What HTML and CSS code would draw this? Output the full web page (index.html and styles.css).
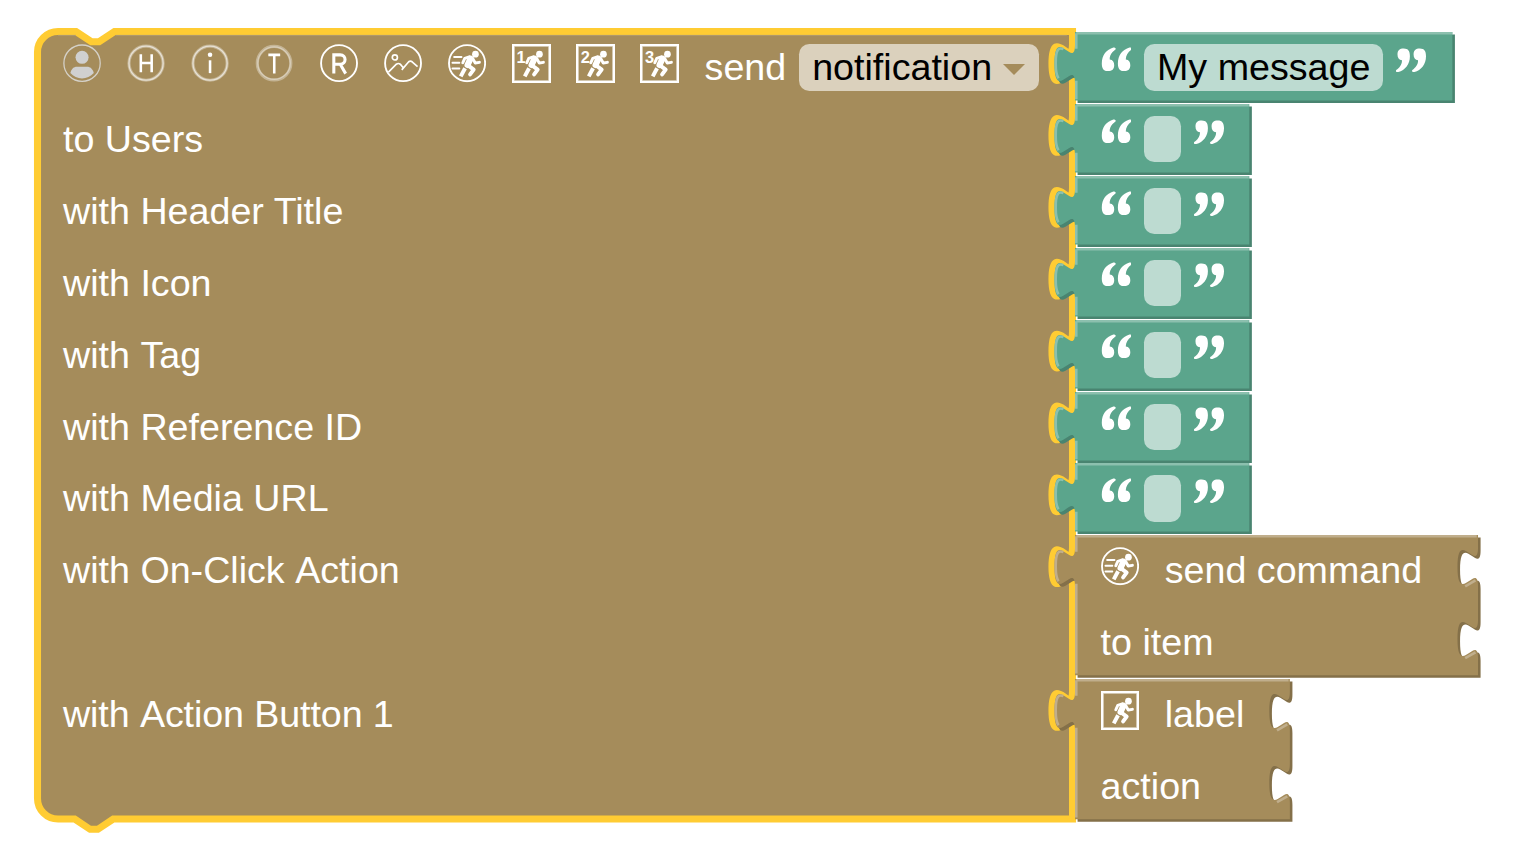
FILE: index.html
```html
<!DOCTYPE html>
<html lang="en">
<head>
<meta charset="utf-8">
<title>Send notification block</title>
<link rel="stylesheet" href="styles.css">
</head>
<body>
<svg class="defs" aria-hidden="true">
  <defs>
    <symbol id="runner" viewBox="0 0 39 39">
      <circle cx="27.800" cy="10.300" r="3.400" fill="#fff"/>
      <g fill="none" stroke="#fff" stroke-linecap="round" stroke-linejoin="round">
        <path d="M22.800 14.800L19.800 21.300" stroke-width="6.200"/>
        <path d="M21.500 13L17 14.500L15 19" stroke-width="3"/>
        <path d="M25 14.800L27.600 19.300L31.800 18.600" stroke-width="3"/>
        <path d="M20.800 22L26 26L22.400 30.800" stroke-width="4"/>
        <path d="M17.300 24.600L12.900 32.800" stroke-width="4" stroke-linecap="butt"/>
      </g>
    </symbol>
    <symbol id="run-circle" viewBox="0 0 39 39">
      <circle cx="19.300" cy="19.400" r="18.300" fill="none" stroke="#fff" stroke-width="1.900"/>
      <path d="M6.200 13.200h7.500M4.500 19h7M4.500 24.800h7" stroke="#fff" stroke-width="1.900" stroke-linecap="round"/>
      <use href="#runner" width="39" height="39"/>
    </symbol>
    <symbol id="open-quote" viewBox="0 0 31 31">
      <g id="q66" fill="#fff">
        <path d="M12.500 2.600C5.500 4.500 .8 10.500 .8 18.500C.8 23.500 2.500 26.200 7 26.200C11.200 26.200 13.300 24.200 13.300 20.300C13.300 16.800 11.800 14.800 8.800 14.500C8.600 10.500 11.200 7 14.600 4.600C15.400 3.400 14.200 2.200 12.500 2.600Z"/>
        <path transform="translate(16.200 0)" d="M12.500 2.600C5.500 4.500 .8 10.500 .8 18.500C.8 23.500 2.500 26.200 7 26.200C11.200 26.200 13.300 24.200 13.300 20.300C13.300 16.800 11.800 14.800 8.800 14.500C8.600 10.500 11.200 7 14.600 4.600C15.400 3.400 14.200 2.200 12.500 2.600Z"/>
      </g>
    </symbol>
    <symbol id="close-quote" viewBox="0 0 31 31">
      <use href="#q66" transform="rotate(180 15.500 14.900)"/>
    </symbol>
    <path id="gs" d="M0 0H67.900V26.700H0V20c0,-10 -8,8 -8,-7.500s8,2.500 8,-7.500Z"/>
  </defs>
</svg>

<main class="workspace">
  <svg class="shape" width="1514" height="846" aria-hidden="true">
    <g transform="translate(37.500 31.500) scale(2.567)">
      <path class="main-fill" d="M0 8A8 8 0 0 1 8 0H15l6,4 3,0 6,-4H403.200
        V5c0,10 -8,-8 -8,7.500s8,-2.500 8,7.500V33c0,10 -8,-8 -8,7.500s8,-2.500 8,7.500
        V61c0,10 -8,-8 -8,7.500s8,-2.500 8,7.500V89c0,10 -8,-8 -8,7.500s8,-2.500 8,7.500
        V117c0,10 -8,-8 -8,7.500s8,-2.500 8,7.500V145c0,10 -8,-8 -8,7.500s8,-2.500 8,7.500
        V173c0,10 -8,-8 -8,7.500s8,-2.500 8,7.500V201c0,10 -8,-8 -8,7.500s8,-2.500 8,7.500
        V257c0,10 -8,-8 -8,7.500s8,-2.500 8,7.500V306.800H29.500l-6,4 -3,0 -6,-4H8A8 8 0 0 1 0 298.800Z"/>
      <path class="main-sheen" d="M8 1.500H15M30.500 1.500H401"/>
    </g>
  </svg>

  <div class="rows">
    <section class="row">
      <div class="head">
        <svg class="icon" viewBox="0 0 39 39"><circle cx="19.300" cy="19.400" r="18.400" fill="none" stroke="#d5d1c8" stroke-width="1.300"/><circle cx="19.300" cy="13.500" r="6.600" fill="#d0d0d0"/><path d="M7.500 29.500C8.500 25 11 23 14 23H24.500C27.500 23 30 25 31.200 29.500C25 36.700 13.500 36.700 7.500 29.500Z" fill="#d0d0d0"/></svg>
        <svg class="icon" viewBox="0 0 39 39"><circle class="halo" cx="19.300" cy="19.400" r="17.300"/><circle class="ring" cx="19.300" cy="19.400" r="17.300"/><path class="glyph" d="M14 10.500V28.500M25 10.500V28.500M14 19.200H25"/></svg>
        <svg class="icon" viewBox="0 0 39 39"><circle class="halo" cx="19.300" cy="19.400" r="17.300"/><circle class="ring" cx="19.300" cy="19.400" r="17.300"/><path class="glyph" d="M19.300 16.500V29.500"/><circle cx="19.300" cy="10.800" r="2.300" fill="#fff"/></svg>
        <svg class="icon" viewBox="0 0 39 39"><circle class="halo" cx="19.300" cy="19.400" r="17"/><circle class="ring dim" cx="19.300" cy="19.400" r="16.500"/><path class="glyph" d="M13.500 11H25.500M19.500 11V30"/></svg>
        <svg class="icon" viewBox="0 0 39 39"><circle class="line" cx="19.300" cy="19.400" r="18.200"/><path class="glyph bold" d="M14 30V11H20.500C27 11 27 20.500 20.500 20.500H14M20.500 20.500L26 30"/></svg>
        <svg class="icon" viewBox="0 0 39 39"><circle class="line" cx="19.300" cy="19.400" r="18.200"/><circle class="line thin" cx="11" cy="13.600" r="2.600"/><path class="line thin" d="M4.500 28.500L12.500 20.500Q14.500 19 16.500 20.500L19.500 24M18 26.200L25 18Q26.700 16.600 28.500 18L34 23"/></svg>
        <svg class="icon"><use href="#run-circle"/></svg>
        <span class="icon boxed"><b class="num">1</b><svg class="pic" viewBox="0 0 39 39"><use href="#runner"/></svg></span>
        <span class="icon boxed"><b class="num">2</b><svg class="pic" viewBox="0 0 39 39"><use href="#runner"/></svg></span>
        <span class="icon boxed"><b class="num">3</b><svg class="pic" viewBox="0 0 39 39"><use href="#runner"/></svg></span>
        <span class="word send">send</span>
        <span class="field dropdown">notification<i class="caret"></i></span>
      </div>
      <div class="value">
        <svg class="shape" aria-hidden="true"><g transform="scale(2.567)"><path class="g-dark" transform="translate(1 1)" d="M0 0H147V26.700H0V20c0,-10 -8,8 -8,-7.500s8,2.500 8,-7.500Z"/><path class="g-fill" d="M0 0H147V26.700H0V20c0,-10 -8,8 -8,-7.500s8,2.500 8,-7.500Z"/><path class="g-light" d="M.5 .5H147M.5 26.200V19M-7.500 12.500c-.1-6 1.300-6.600 3-5.800M.5 6.500V.5M-7.500 12.500c0 3 .3 4.500 1.100 5.500"/></g></svg>
        <svg class="quote"><use href="#open-quote"/></svg>
        <span class="field">My message</span>
        <svg class="quote"><use href="#close-quote"/></svg>
      </div>
    </section>
    <section class="row"><span class="label">to Users</span><div class="value text-block"></div></section>
    <section class="row"><span class="label">with Header Title</span><div class="value text-block"></div></section>
    <section class="row"><span class="label">with Icon</span><div class="value text-block"></div></section>
    <section class="row"><span class="label">with&nbsp;Tag</span><div class="value text-block"></div></section>
    <section class="row"><span class="label">with Reference ID</span><div class="value text-block"></div></section>
    <section class="row"><span class="label">with Media URL</span><div class="value text-block"></div></section>
    <section class="row tall"><span class="label">with On-Click&nbsp;Action</span>
      <div class="value stack">
        <svg class="shape" aria-hidden="true"><g transform="scale(2.567)"><path class="b-dark" transform="translate(1 1)" d="M0 0H157V5c0,10 -8,-8 -8,7.500s8,-2.500 8,7.500V33c0,10 -8,-8 -8,7.500s8,-2.500 8,7.500V54.600H0V20c0,-10 -8,8 -8,-7.500s8,2.500 8,-7.500Z"/><path class="b-fill" d="M0 0H157V5c0,10 -8,-8 -8,7.500s8,-2.500 8,7.500V33c0,10 -8,-8 -8,7.500s8,-2.500 8,7.500V54.600H0V20c0,-10 -8,8 -8,-7.500s8,2.500 8,-7.500Z"/><path class="b-light" d="M.5 .5H156.500M.5 54V19M-7.500 12.500c-.1-6 1.300-6.600 3-5.800M.5 6.500V.5M-7.500 12.500c0 3 .3 4.500 1.100 5.500M152 20L156 17.700M152 48L156 45.700"/></g></svg>
        <div class="line-row"><svg class="icon"><use href="#run-circle"/></svg><span class="word">send command</span></div>
        <div class="line-row"><span class="word">to item</span></div>
      </div>
    </section>
    <section class="row tall"><span class="label snug">with&nbsp;Action Button 1</span>
      <div class="value stack">
        <svg class="shape" aria-hidden="true"><g transform="scale(2.567)"><path class="b-dark" transform="translate(1 1)" d="M0 0H83.700V5c0,10 -8,-8 -8,7.500s8,-2.500 8,7.500V33c0,10 -8,-8 -8,7.500s8,-2.500 8,7.500V54.600H0V20c0,-10 -8,8 -8,-7.500s8,2.500 8,-7.500Z"/><path class="b-fill" d="M0 0H83.700V5c0,10 -8,-8 -8,7.500s8,-2.500 8,7.500V33c0,10 -8,-8 -8,7.500s8,-2.500 8,7.500V54.600H0V20c0,-10 -8,8 -8,-7.500s8,2.500 8,-7.500Z"/><path class="b-light" d="M.5 .5H83.200M.5 54V19M-7.500 12.500c-.1-6 1.300-6.600 3-5.800M.5 6.500V.5M-7.500 12.500c0 3 .3 4.500 1.100 5.500M78.700 20L82.700 17.700M78.700 48L82.700 45.700"/></g></svg>
        <div class="line-row"><span class="icon boxed"><svg class="pic" viewBox="0 0 39 39"><use href="#runner"/></svg></span><span class="word">label</span></div>
        <div class="line-row"><span class="word">action</span></div>
      </div>
    </section>
  </div>
</main>
<template id="text-block">
  <svg class="shape" aria-hidden="true"><g transform="scale(2.567)"><use class="g-dark" href="#gs" transform="translate(1 1)"/><use class="g-fill" href="#gs"/><path class="g-light" d="M.5 .5H67.700M.5 26.200V19M-7.500 12.500c-.1-6 1.300-6.600 3-5.800M.5 6.500V.5M-7.500 12.500c0 3 .3 4.500 1.100 5.500"/></g></svg>
  <svg class="quote"><use href="#open-quote"/></svg>
  <span class="field empty"></span>
  <svg class="quote"><use href="#close-quote"/></svg>
</template>
<script src="blocks.js"></script>
</body>
</html>
```
FILE: styles.css
```css
body {
  margin: 0;
  background: #fff;
  font-family: "Liberation Sans", Arial, sans-serif;
  font-size: 37.65px;
  color: #fff;
}
.defs { position: absolute; width: 0; height: 0; }
.workspace {
  position: relative;
  box-sizing: border-box;
  width: 1514px;
  height: 846px;
  padding: 32.300px 0 0 63px;
  overflow: hidden;
}
.shape { position: absolute; left: 0; top: 0; overflow: visible; }
.rows { position: relative; display: grid; grid-template-rows: repeat(7, 71.87px) 143.74px 143.74px; }
.row { display: grid; grid-template-columns: 1012px max-content; }
.label, .word { line-height: 71.87px; white-space: pre; }
.label { height: 71.87px; }
.snug { letter-spacing: -.1px; }
.head { display: flex; gap: 25.670px; height: 71.87px; }
.icon { flex: none; width: 38.500px; height: 38.500px; margin-top: 12px; }
.boxed { position: relative; box-sizing: border-box; border: 2px solid #fff; box-shadow: inset 0 0 0 .800px #fffa; }
.pic { position: absolute; left: -2px; top: -2px; width: 38.500px; height: 38.500px; }
.num { position: absolute; left: 2.500px; top: 1.500px; font-size: 16.500px; line-height: 18px; }
.field {
  flex: none;
  box-sizing: border-box;
  height: 46.300px;
  margin-top: 12px;
  padding: 0 12.800px;
  border-radius: 10.300px;
  background: #bddbd1;
  color: #000;
  line-height: 47.500px;
}
.dropdown { display: flex; width: 240px; margin-left: -12.500px; background: #dbd1bd; }
.caret {
  width: 0;
  height: 0;
  margin: 20px 0 0 11px;
  border: solid transparent;
  border-width: 11px 11px 0;
  border-top-color: #a58c5b;
}
.value { position: relative; isolation: isolate; display: flex; gap: 12.830px; height: 71.87px; padding-left: 25.600px; }
.value .shape { z-index: -1; width: 1px; height: 1px; }
.quote { flex: none; width: 30.800px; height: 30.800px; margin-top: 12.500px; }
.empty { width: 36.500px; }
.stack { display: block; height: 143.74px; }
.line-row { display: flex; gap: 25.670px; height: 71.87px; }
.halo { fill: none; stroke: #fff; stroke-opacity: .35; stroke-width: 3.200; }
.ring { fill: none; stroke: #fff; stroke-opacity: .6; stroke-width: 1.300; }
.dim { stroke-opacity: .35; }
.glyph { fill: none; stroke: #fff; stroke-width: 2.600; }
.bold { stroke-width: 3.100; }
.line { fill: none; stroke: #fff; stroke-width: 1.900; }
.thin { stroke-width: 1.700; }
.main-fill { fill: #a58c5b; stroke: #fc3; stroke-width: 2.750; }
.main-sheen { fill: none; stroke: #b5a075; stroke-width: .3; }
.g-fill { fill: #5ba58c; }
.g-dark { fill: #498470; }
.g-light { fill: none; stroke: #8cc0ae; stroke-width: 1; }
.b-fill { fill: #a58c5b; }
.b-dark { fill: #847049; }
.b-light { fill: none; stroke: #c0ae8c; stroke-width: 1; }
```
FILE: blocks.js
```js
const template = document.getElementById("text-block");
document.querySelectorAll(".text-block").forEach((block) => {
  block.append(template.content.cloneNode(true));
});
```
